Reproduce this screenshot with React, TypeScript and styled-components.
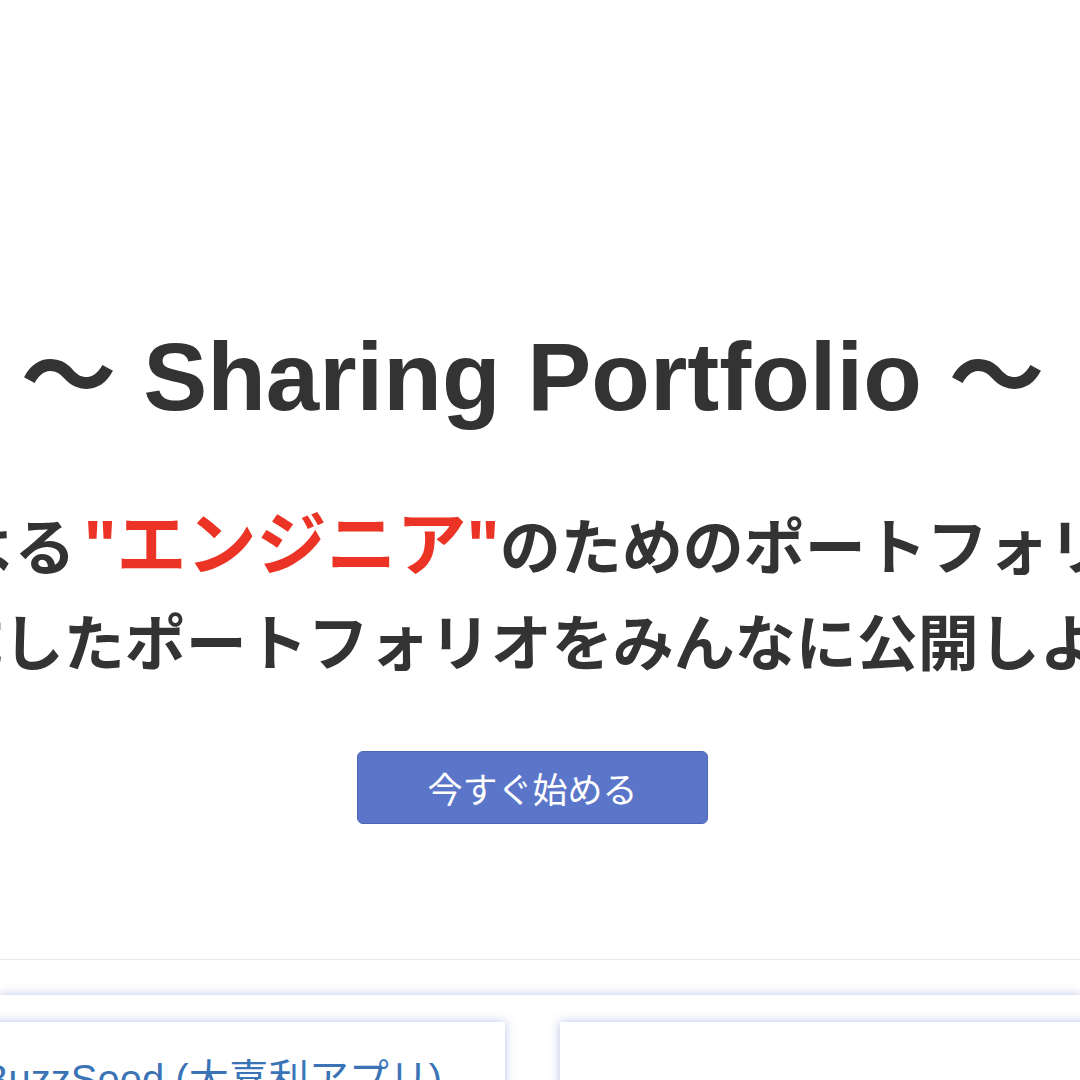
import React from "react";
import styled, { createGlobalStyle } from "styled-components";

const GlobalStyle = createGlobalStyle`
  html, body {
    margin: 0;
    padding: 0;
    background: #ffffff;
    overflow: hidden;
  }
  body {
    font-family: "Liberation Sans", "Noto Sans CJK JP", sans-serif;
    color: #333333;
  }
`;

interface PortfolioItem {
  id: number;
  title: string;
}

const portfolios: PortfolioItem[] = [
  { id: 1, title: "BuzzSeed (大喜利アプリ)" },
  { id: 2, title: "DevNote (技術メモアプリ)" },
];

const App = () => {
  return (
    <Page>
      <GlobalStyle />
      <Hero>
        <Title>〜 Sharing Portfolio 〜</Title>
        <Lead>
          <LeadLine>
            エンジニアによる<Accent>"エンジニア"</Accent>のためのポートフォリオ共有サイト
          </LeadLine>
          <LeadLine>作成したポートフォリオをみんなに公開しよう!</LeadLine>
        </Lead>
        <StartButton type="button">今すぐ始める</StartButton>
      </Hero>
      <TabStrip />
      <Feed>
        <CardRow>
          {portfolios.map((item) => (
            <Card key={item.id}>
              <CardTitle href="#">{item.title}</CardTitle>
            </Card>
          ))}
        </CardRow>
      </Feed>
    </Page>
  );
};

export default App;

const Page = styled.div`
  width: 100%;
  min-height: 1080px;
  overflow: hidden;
`;

// 15px on the right is the scrollbar gutter of the original page
const Hero = styled.section`
  display: flex;
  flex-direction: column;
  align-items: center;
  padding: 319px 15px 135px 0;
  border-bottom: 1px solid #e9e9e9;
`;

const Title = styled.h1`
  margin: 0;
  white-space: nowrap;
  font-family: "Liberation Sans", "Noto Sans CJK JP", sans-serif;
  font-size: 96px;
  font-weight: 700;
  line-height: 116px;
  color: #333333;
`;

const Lead = styled.div`
  display: flex;
  flex-direction: column;
  align-items: center;
  margin-top: 62px;
`;

const LeadLine = styled.p`
  margin: 0;
  white-space: nowrap;
  font-family: "Noto Sans CJK JP", sans-serif;
  font-size: 61px;
  font-weight: 700;
  line-height: 93px;
  color: #333333;
`;

const Accent = styled.span`
  padding-left: 8px;
  font-family: "Liberation Sans", "Noto Sans CJK JP", sans-serif;
  font-size: 70px;
  color: #ec3426;
`;

const StartButton = styled.button`
  margin-top: 65px;
  width: 351px;
  height: 73px;
  padding: 0;
  border: 1px solid #4c68b5;
  border-radius: 6px;
  background: #5b76c8;
  color: #ffffff;
  font-family: "Noto Sans CJK JP", sans-serif;
  font-size: 35px;
  font-weight: 400;
  cursor: pointer;
`;

const TabStrip = styled.div`
  height: 35px;
  background: #ffffff;
`;

const Feed = styled.section`
  padding: 27px 15px 0 0;
  background: #ffffff;
  box-shadow: 0 0 10px rgba(60, 80, 190, 0.35);
`;

const CardRow = styled.div`
  display: flex;
  justify-content: center;
  gap: 55px;
`;

const Card = styled.article`
  flex: 0 0 1055px;
  min-height: 320px;
  box-sizing: border-box;
  padding: 29px 63px 40px;
  background: #ffffff;
  box-shadow: 0 0 10px rgba(60, 80, 190, 0.35);
  text-align: right;
`;

const CardTitle = styled.a`
  display: block;
  font-family: "Liberation Sans", "Noto Sans CJK JP", sans-serif;
  font-size: 40px;
  line-height: 56px;
  color: #3a74b6;
  text-decoration: none;
  white-space: nowrap;
`;
